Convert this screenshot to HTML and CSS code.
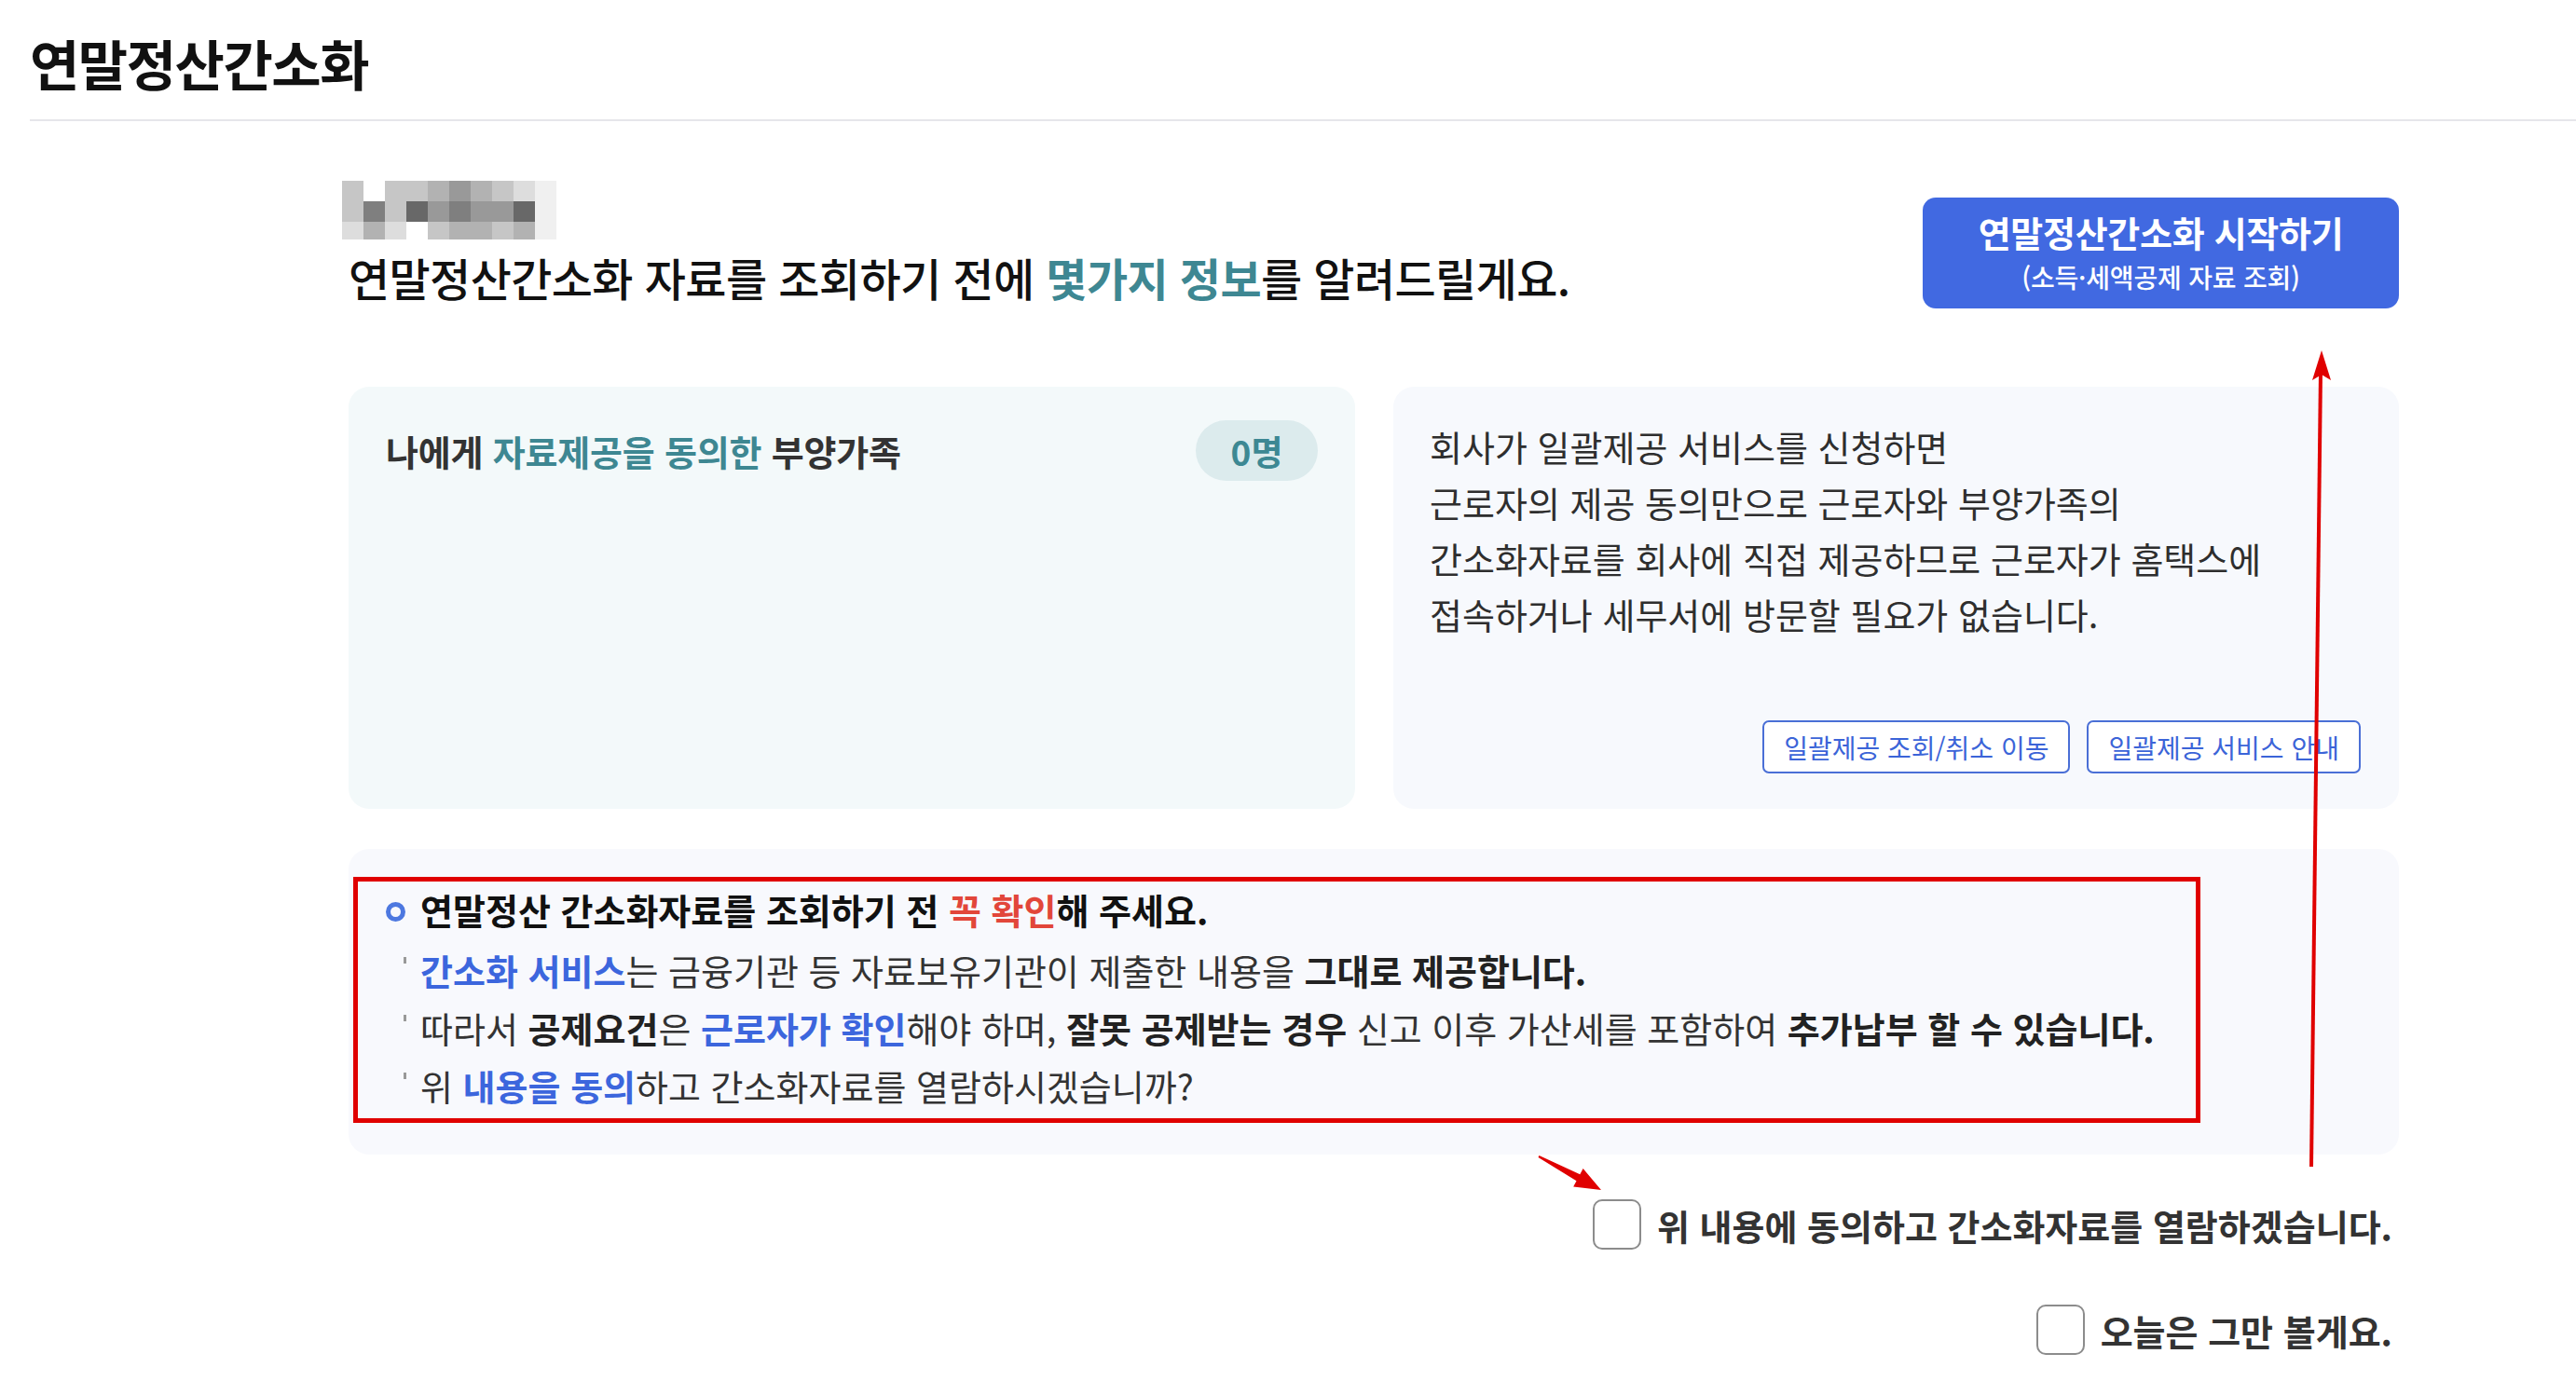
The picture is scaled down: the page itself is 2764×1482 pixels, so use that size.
FILE: index.html
```html
<!DOCTYPE html>
<html lang="ko">
<head>
    <meta charset="UTF-8">
    <meta name="viewport" content="width=device-width, initial-scale=1.0">
    <title>연말정산간소화</title>
    <link rel="stylesheet" href="styles.css">
</head>
<body>

<header class="page-header">
    <h1>연말정산간소화</h1>
</header>

<main class="content">
    <section class="intro">
        <div class="intro-text">
            <!-- masked user name -->
            <div class="masked-name">
                <span class="g3"></span><span class="g0"></span><span class="g3"></span><span class="g3"></span><span class="g4"></span><span class="g5"></span><span class="g4"></span><span class="g3"></span><span class="g2"></span><span class="g1"></span>
                <span class="g3"></span><span class="g6"></span><span class="g3"></span><span class="g7"></span><span class="g5"></span><span class="g6"></span><span class="g5"></span><span class="g5"></span><span class="g7"></span><span class="g1"></span>
                <span class="g2"></span><span class="g4"></span><span class="g2"></span><span class="g0"></span><span class="g3"></span><span class="g4"></span><span class="g4"></span><span class="g3"></span><span class="g4"></span><span class="g1"></span>
            </div>
            <p class="lead">연말정산간소화 자료를 조회하기 전에 <strong>몇가지 정보</strong>를 알려드릴게요.</p>
        </div>
        <button type="button" class="start-btn">
            <span class="start-main">연말정산간소화 시작하기</span>
            <span class="start-sub">(소득·세액공제 자료 조회)</span>
        </button>
    </section>

    <section class="cards">
        <div class="card card-family">
            <div class="family-head">
                <p>나에게 <em>자료제공을 동의한</em> 부양가족</p>
                <span class="count">0명</span>
            </div>
        </div>
        <div class="card card-bulk">
            <p class="bulk-text">회사가 일괄제공 서비스를 신청하면<br>근로자의 제공 동의만으로 근로자와 부양가족의<br>간소화자료를 회사에 직접 제공하므로 근로자가 홈택스에<br>접속하거나 세무서에 방문할 필요가 없습니다.</p>
            <div class="bulk-actions">
                <a href="#" class="line-btn">일괄제공 조회/취소 이동</a>
                <a href="#" class="line-btn">일괄제공 서비스 안내</a>
            </div>
        </div>
    </section>

    <section class="notice">
        <h2><span class="ring"></span>연말정산 간소화자료를 조회하기 전 <span class="red">꼭 확인</span>해 주세요.</h2>
        <ul>
            <li><b class="blue">간소화 서비스</b>는 금융기관 등 자료보유기관이 제출한 내용을 <b>그대로 제공합니다.</b></li>
            <li>따라서 <b>공제요건</b>은 <b class="blue">근로자가 확인</b>해야 하며, <b>잘못 공제받는 경우</b> 신고 이후 가산세를 포함하여 <b>추가납부 할 수 있습니다.</b></li>
            <li>위 <b class="blue">내용을 동의</b>하고 간소화자료를 열람하시겠습니까?</li>
        </ul>
        <div class="mark-box"></div>
    </section>

    <div class="agree">
        <label class="check"><span class="box"></span>위 내용에 동의하고 간소화자료를 열람하겠습니다.</label>
        <label class="check"><span class="box"></span>오늘은 그만 볼게요.</label>
    </div>
</main>

<!-- red annotation arrows -->
<svg class="annotations" width="2764" height="1482" viewBox="0 0 2764 1482">
    <line x1="2480" y1="1252" x2="2490" y2="398" stroke="#e00000" stroke-width="4"/>
    <polygon points="2491,376 2501,408 2491,402 2481,408" fill="#e00000"/>
    <polygon points="1651.5,1240 1695.3,1260.3 1698.6,1254.1 1718,1277 1688.2,1273.5 1691.5,1267.3 1650.5,1242" fill="#e00000"/>
</svg>

</body>
</html>
```

FILE: styles.css
```css
* {
    box-sizing: border-box;
}
body {
    margin: 0;
    padding: 0;
    background-color: #fff;
    font-family: "Noto Sans CJK KR", "Noto Sans", sans-serif;
    color: #333;
    position: relative;
    min-height: 1482px;
}
.page-header {
    margin-left: 32px;
    border-bottom: 2px solid #e6e6ea;
    padding: 33px 0 26px;
}
.page-header h1 {
    margin: 0;
    font-size: 58px;
    line-height: 69px;
    font-weight: 700;
    letter-spacing: -1.5px;
    color: #111;
}
.content {
    margin-left: 374px;
    width: 2200px;
}

/* intro row */
.intro {
    display: flex;
    justify-content: space-between;
    align-items: flex-start;
    padding-top: 64px;
}
.masked-name {
    display: grid;
    grid-template-columns: repeat(10, 23px);
    grid-template-rows: 22px 22px 19px;
    margin-left: -7px;
}
.masked-name .g0 { background-color: #fff; }
.masked-name .g1 { background-color: #f0f0f0; }
.masked-name .g2 { background-color: #dddddd; }
.masked-name .g3 { background-color: #c6c6c6; }
.masked-name .g4 { background-color: #b2b2b2; }
.masked-name .g5 { background-color: #999; }
.masked-name .g6 { background-color: #7f7f7f; }
.masked-name .g7 { background-color: #686868; }
.lead {
    margin: 10px 0 0;
    font-size: 48px;
    line-height: 60px;
    font-weight: 500;
    letter-spacing: -0.6px;
    color: #111;
}
.lead strong {
    color: #3e8792;
    font-weight: 700;
}
.start-btn {
    margin-top: 18px;
    width: 511px;
    height: 119px;
    border: none;
    border-radius: 14px;
    background-color: #4169e1;
    color: #fff;
    font-family: inherit;
    display: flex;
    flex-direction: column;
    align-items: center;
    justify-content: center;
    gap: 11px;
    cursor: pointer;
}
.start-main {
    font-size: 38px;
    line-height: 40px;
    font-weight: 700;
    letter-spacing: -0.3px;
}
.start-sub {
    font-size: 28px;
    line-height: 34px;
    font-weight: 500;
    letter-spacing: -0.2px;
}

/* cards */
.cards {
    display: grid;
    grid-template-columns: 1080px 1079px;
    gap: 41px;
    margin-top: 84px;
}
.card {
    height: 453px;
    border-radius: 22px;
}
.card-family {
    background-color: #f3f9fa;
    padding: 36px 40px;
}
.family-head {
    display: flex;
    justify-content: space-between;
    align-items: center;
}
.family-head p {
    margin: 0;
    font-size: 38px;
    font-weight: 700;
    letter-spacing: -0.2px;
    color: #333;
}
.family-head em {
    font-style: normal;
    color: #3e8792;
}
.count {
    width: 131px;
    height: 65px;
    border-radius: 33px;
    background-color: #dcebed;
    color: #3d8893;
    font-size: 37px;
    font-weight: 700;
    display: flex;
    align-items: center;
    justify-content: center;
}
.card-bulk {
    background-color: #f7f9fd;
    padding: 34px 41px 38px 39px;
    display: flex;
    flex-direction: column;
}
.bulk-text {
    margin: 0;
    font-size: 38px;
    line-height: 60px;
    color: #2e2e2e;
}
.bulk-actions {
    margin-top: auto;
    display: flex;
    justify-content: flex-end;
    gap: 18px;
}
.line-btn {
    height: 57px;
    padding: 0 21px;
    border: 2px solid #4a6fd6;
    border-radius: 7px;
    background-color: #fff;
    color: #3b64d8;
    font-size: 28px;
    text-decoration: none;
    display: flex;
    align-items: center;
}

/* notice */
.notice {
    position: relative;
    margin-top: 43px;
    background-color: #f8f9fd;
    border-radius: 22px;
    padding: 34px 40px 43px;
}
.notice h2 {
    margin: 0 0 3px;
    font-size: 38px;
    line-height: 62px;
    font-weight: 700;
    color: #111;
    letter-spacing: 0;
}
.ring {
    display: inline-block;
    vertical-align: middle;
    width: 21px;
    height: 21px;
    border: 5px solid #4d78e0;
    border-radius: 50%;
    margin: -6px 16px 0 0;
}
.red {
    color: #e2463a;
}
.notice ul {
    list-style: none;
    margin: 0;
    padding: 0 0 0 37px;
}
.notice li {
    position: relative;
    font-size: 38px;
    line-height: 62px;
    color: #333;
    letter-spacing: 0;
}
.notice li::before {
    content: "";
    position: absolute;
    left: -18px;
    top: 17px;
    width: 3px;
    height: 7px;
    background-color: #999;
}
.notice b {
    font-weight: 700;
    color: #222;
}
.notice b.blue {
    color: #3c66dd;
}
.mark-box {
    position: absolute;
    left: 5px;
    top: 30px;
    width: 1982px;
    height: 264px;
    border: 5px solid #e00000;
}

/* agree checks */
.agree {
    display: flex;
    flex-direction: column;
    align-items: flex-end;
    gap: 53px;
    margin-top: 45px;
    padding-right: 7px;
}
.check {
    height: 60px;
    display: flex;
    align-items: center;
    gap: 17px;
    font-size: 38px;
    font-weight: 700;
    color: #333;
    letter-spacing: 0;
    cursor: pointer;
}
.box {
    width: 52px;
    height: 54px;
    border: 2px solid #8c8c8c;
    border-radius: 10px;
    background-color: #fff;
}

.annotations {
    position: absolute;
    left: 0;
    top: 0;
    pointer-events: none;
}
```
